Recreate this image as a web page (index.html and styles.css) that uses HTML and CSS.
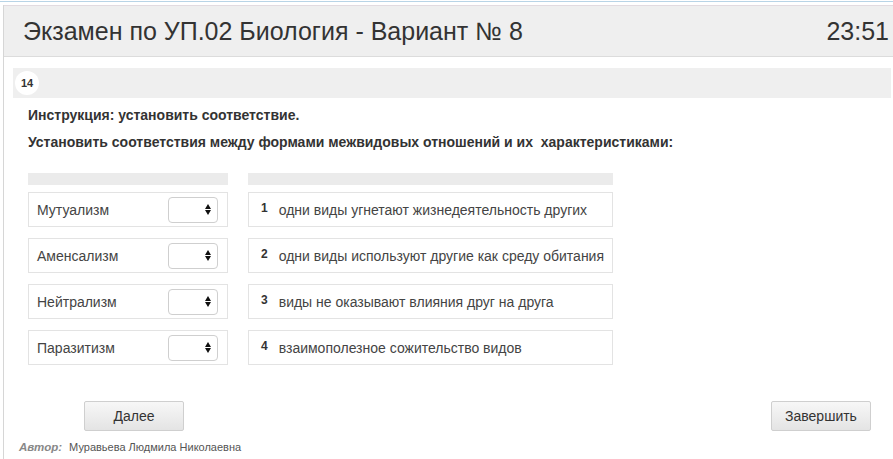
FILE: index.html
```html
<!DOCTYPE html>
<html lang="ru">
<head>
  <meta charset="UTF-8" />
  <title>Экзамен по УП.02 Биология</title>
  <link rel="stylesheet" href="styles.css">
</head>
<body>
  <div class="top-line"></div>
  <div class="page">
    <div class="header">
      <h1>Экзамен по УП.02 Биология - Вариант № 8</h1>
      <span class="timer">23:51</span>
    </div>

    <div class="content">
      <div class="q-bar">
        <span class="q-num">14</span>
      </div>

      <p class="instr">Инструкция: установить соответствие.</p>
      <p class="instr">Установить соответствия между формами межвидовых отношений и их&nbsp; характеристиками:</p>

      <div class="match">
        <div class="col col-left">
          <div class="col-head"></div>
          <div class="item">
            <span>Мутуализм</span>
            <span class="sel"><i class="arrows"></i></span>
          </div>
          <div class="item">
            <span>Аменсализм</span>
            <span class="sel"><i class="arrows"></i></span>
          </div>
          <div class="item">
            <span>Нейтрализм</span>
            <span class="sel"><i class="arrows"></i></span>
          </div>
          <div class="item">
            <span>Паразитизм</span>
            <span class="sel"><i class="arrows"></i></span>
          </div>
        </div>
        <div class="col col-right">
          <div class="col-head"></div>
          <div class="item answer"><b>1</b> одни виды угнетают жизнедеятельность других</div>
          <div class="item answer"><b>2</b> одни виды используют другие как среду обитания</div>
          <div class="item answer"><b>3</b> виды не оказывают влияния друг на друга</div>
          <div class="item answer"><b>4</b> взаимополезное сожительство видов</div>
        </div>
      </div>

      <div class="actions">
        <button class="btn btn-next">Далее</button>
        <button class="btn btn-finish">Завершить</button>
      </div>

      <div class="author"><em>Автор:</em> Муравьева Людмила Николаевна</div>
    </div>
  </div>
</body>
</html>
```

FILE: styles.css
```css
body {
  margin: 0;
  font-family: "Liberation Sans", Arial, sans-serif;
  color: #333;
  background: #fff;
}
.top-line {
  height: 1px;
  margin-top: 1px;
  background: #b8d4e6;
}
.page {
  margin: 3px 0 0 3px;
  border-left: 1px solid #d6d6d6;
  height: 454px;
}
.header {
  display: flex;
  align-items: center;
  justify-content: space-between;
  height: 50px;
  padding: 0 4px 0 19px;
  background: #efefef;
  border-top: 1px solid #e2dbe0;
  border-bottom: 1px solid #dcdcdc;
}
h1 {
  margin: 0;
  font-size: 25px;
  font-weight: normal;
  color: #333;
}
.timer {
  font-size: 25px;
  color: #333;
}
.content {
  padding: 11px 2px 0 9px;
}
.q-bar {
  height: 30px;
  background: #efefef;
  display: flex;
  align-items: center;
  padding-left: 2px;
}
.q-num {
  width: 24px;
  height: 24px;
  border-radius: 50%;
  background: #fff;
  font-size: 11px;
  font-weight: bold;
  display: flex;
  align-items: center;
  justify-content: center;
  color: #333;
}
.instr {
  margin: 8px 0 0 15px;
  font-size: 14px;
  font-weight: bold;
  line-height: 18px;
  color: #333;
}
.instr + .instr {
  margin-top: 9px;
}
.match {
  display: flex;
  gap: 20px;
  margin: 22px 0 0 15px;
}
.col {
  display: flex;
  flex-direction: column;
  gap: 11px;
}
.col-left {
  width: 200px;
}
.col-right {
  width: 365px;
}
.col-head {
  height: 12px;
  background: #ebebeb;
  margin-bottom: -4px;
}
.item {
  box-sizing: border-box;
  height: 35px;
  border: 1px solid #e3e3e3;
  display: flex;
  align-items: center;
  justify-content: space-between;
  padding: 0 9px 0 8px;
  font-size: 14px;
  color: #444;
  white-space: nowrap;
}
.sel {
  box-sizing: border-box;
  width: 50px;
  height: 26px;
  border: 1px solid #cfcfcf;
  border-radius: 4px;
  background: #fff;
  display: flex;
  justify-content: flex-end;
  align-items: center;
  padding-right: 5px;
}
.arrows {
  position: relative;
  width: 7px;
  height: 11px;
}
.arrows::before,
.arrows::after {
  content: "";
  position: absolute;
  left: 0;
  border-left: 3.5px solid transparent;
  border-right: 3.5px solid transparent;
}
.arrows::before {
  top: 0;
  border-bottom: 5px solid #111;
}
.arrows::after {
  bottom: 0;
  border-top: 5px solid #111;
}
.answer {
  justify-content: flex-start;
  padding: 0 4px 0 12px;
  font-size: 14px;
}
.answer b {
  font-size: 12px;
  color: #333;
  margin-right: 11px;
  align-self: flex-start;
  margin-top: 8px;
}
.actions {
  display: flex;
  justify-content: space-between;
  margin: 36px 0 0 71px;
  padding-right: 20px;
}
.btn {
  width: 100px;
  height: 30px;
  font-family: "Liberation Sans", Arial, sans-serif;
  font-size: 14px;
  color: #333;
  border: 1px solid #cfcfcf;
  border-radius: 2px;
  background: linear-gradient(#f7f7f7, #e4e4e4);
}
.author {
  margin: 10px 0 0 6px;
  font-size: 11px;
  color: #555;
}
.author em {
  font-weight: bold;
  color: #888;
  font-size: 11.5px;
  margin-right: 4px;
}
```
